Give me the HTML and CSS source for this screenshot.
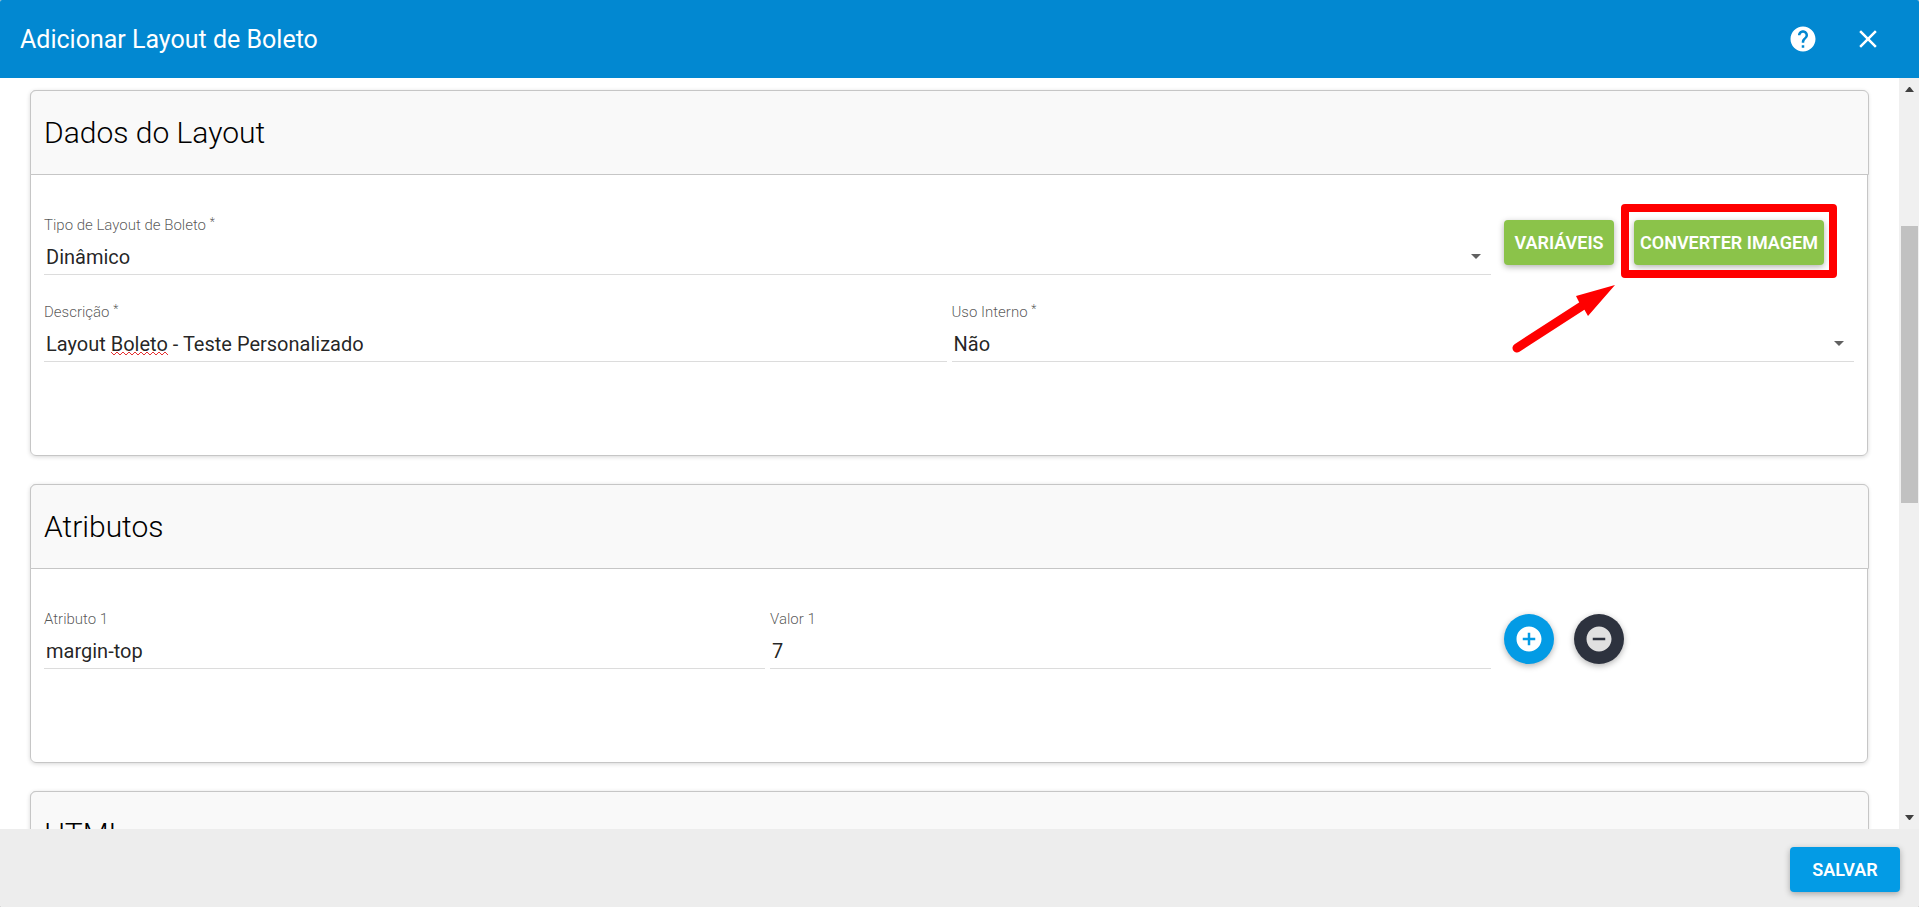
FILE: index.html
```html
<!DOCTYPE html>
<html lang="pt-BR">
<head>
<meta charset="utf-8">
<title>Adicionar Layout de Boleto</title>
<link rel="stylesheet" href="styles.css">
</head>
<body>
<div class="dialog">
  <header class="toolbar">
    <h1 class="toolbar-title">Adicionar Layout de Boleto</h1>
    <div class="toolbar-actions">
      <button class="icon-button" type="button" aria-label="Ajuda">
        <svg class="icon" viewBox="0 0 24 24"><path d="M12 2C6.480 2 2 6.480 2 12s4.480 10 10 10 10-4.480 10-10S17.520 2 12 2zm1 17h-2v-2h2v2zm2.070-7.750l-.9.920C13.450 12.900 13 13.500 13 15h-2v-.5c0-1.100.45-2.100 1.170-2.830l1.240-1.260c.37-.36.59-.86.59-1.410 0-1.100-.9-2-2-2s-2 .9-2 2H8c0-2.210 1.790-4 4-4s4 1.790 4 4c0 .88-.36 1.680-.93 2.250z"/></svg>
      </button>
      <button class="icon-button" type="button" aria-label="Fechar">
        <svg class="icon" viewBox="0 0 24 24"><path d="M19 6.410L17.590 5 12 10.590 6.410 5 5 6.410 10.590 12 5 17.590 6.410 19 12 13.410 17.590 19 19 17.590 13.410 12z"/></svg>
      </button>
    </div>
  </header>

  <div class="viewport">
    <main class="content">
      <section class="card">
        <h2 class="card-head">Dados do Layout</h2>
        <div class="card-body">
          <div class="row">
            <div class="field w80">
              <label for="tipo">Tipo de Layout de Boleto <sup>*</sup></label>
              <div class="control dropdown"><select id="tipo"><option>Dinâmico</option></select></div>
            </div>
            <div class="actions">
              <button class="btn btn-green" type="button">Variáveis</button>
              <div class="callout">
                <button class="btn btn-green btn-snug" type="button">Converter Imagem</button>
                <span class="callout-frame"></span>
                <svg class="callout-arrow" viewBox="0 0 104 72"><path d="M5 64L73 20" stroke="#f00" stroke-width="9" stroke-linecap="round"/><path d="M103 1L64 12L68 20L72 25L76 32Z" fill="#f00"/></svg>
              </div>
            </div>
          </div>
          <div class="row">
            <div class="field w50">
              <label for="descricao">Descrição <sup>*</sup></label>
              <div class="control">
                <input id="descricao" type="text" value="Layout Boleto - Teste Personalizado" spellcheck="false">
                <svg class="squiggle" viewBox="0 0 57 5"><path d="M0 1l3 3 3-3 3 3 3-3 3 3 3-3 3 3 3-3 3 3 3-3 3 3 3-3 3 3 3-3 3 3 3-3 3 3 3-3 3 3"/></svg>
              </div>
            </div>
            <div class="field w50">
              <label for="uso">Uso Interno <sup>*</sup></label>
              <div class="control dropdown"><select id="uso"><option>Não</option></select></div>
            </div>
          </div>
        </div>
      </section>

      <section class="card">
        <h2 class="card-head">Atributos</h2>
        <div class="card-body">
          <div class="row">
            <div class="field w40">
              <label for="atributo">Atributo 1</label>
              <div class="control"><input id="atributo" type="text" value="margin-top"></div>
            </div>
            <div class="field w40">
              <label for="valor">Valor 1</label>
              <div class="control"><input id="valor" type="text" value="7"></div>
            </div>
            <div class="actions">
              <button class="fab fab-add" type="button" aria-label="Adicionar atributo">
                <svg class="icon" viewBox="0 0 24 24"><path d="M12 2C6.480 2 2 6.480 2 12s4.480 10 10 10 10-4.480 10-10S17.520 2 12 2zm5 11h-4v4h-2v-4H7v-2h4V7h2v4h4v2z"/></svg>
              </button>
              <button class="fab fab-remove" type="button" aria-label="Remover atributo">
                <svg class="icon" viewBox="0 0 24 24"><path d="M12 2C6.480 2 2 6.480 2 12s4.480 10 10 10 10-4.480 10-10S17.520 2 12 2zm5 11H7v-2h10v2z"/></svg>
              </button>
            </div>
          </div>
        </div>
      </section>

      <section class="card">
        <h2 class="card-head">HTML</h2>
        <div class="card-body"></div>
      </section>
    </main>

    <div class="scrollbar" aria-hidden="true">
      <svg class="scroll-arrow" viewBox="0 0 9 5"><path d="M0 5h9L5 0H4z"/></svg>
      <div class="scroll-track"><div class="scroll-thumb"></div></div>
      <svg class="scroll-arrow" viewBox="0 0 9 5"><path d="M0 0h9L5 5H4z"/></svg>
    </div>
  </div>

  <footer class="footer">
    <button class="btn btn-blue" type="submit">Salvar</button>
  </footer>
</div>
</body>
</html>
```
FILE: styles.css
```css
* {
  box-sizing: border-box;
}

body {
  margin: 0;
  background: #b5b5b5;
  font-family: Roboto, "Liberation Sans", sans-serif;
  font-weight: 300;
  color: rgba(0, 0, 0, 0.87);
}

button,
input,
select {
  font: inherit;
  color: inherit;
}

.dialog {
  display: flex;
  flex-direction: column;
  height: 100vh;
  overflow: hidden;
  border-radius: 2px;
  background: #fff;
}

/* Toolbar */
.toolbar {
  display: flex;
  flex: none;
  align-items: center;
  justify-content: space-between;
  height: 78px;
  padding: 0 26px 0 20px;
  background: #0288d1;
  color: #fff;
}

.toolbar-title {
  margin: 0;
  font-size: 25px;
  font-weight: 400;
}

.toolbar-actions {
  display: flex;
  gap: 15px;
}

.icon-button {
  display: grid;
  place-items: center;
  width: 50px;
  height: 50px;
  padding: 0;
  border: 0;
  background: none;
}

.icon {
  width: 30px;
  height: 30px;
  fill: currentColor;
}

/* Scrolling area */
.viewport {
  display: flex;
  flex: 1;
  min-height: 0;
}

.content {
  display: flex;
  flex: 1;
  flex-direction: column;
  gap: 28px;
  padding: 12px 31px 0 30px;
  overflow: hidden;
}

.scrollbar {
  display: flex;
  flex-direction: column;
  align-items: center;
  justify-content: space-between;
  width: 20px;
  padding: 9px 1px 9px 2px;
  background: #f0f0f0;
}

.scroll-arrow {
  flex: none;
  width: 9px;
  height: 5px;
  fill: #404040;
}

.scroll-track {
  flex: 1;
  width: 100%;
  padding-top: 134px;
}

.scroll-thumb {
  height: 47%;
  background: #c1c1c1;
}

/* Cards */
.card {
  flex: none;
  border: 1px solid #c6c6c6;
  border-radius: 6px;
  box-shadow: 0 1px 4px rgba(0, 0, 0, 0.16);
}

.card-head {
  margin: -1px -2px 0 -1px;
  padding: 22px 13px;
  border: 1px solid #c6c6c6;
  border-radius: 6px 6px 0 0;
  background: #f9f9f9;
  color: #000;
  font-size: 30px;
  font-weight: 300;
  line-height: 39px;
}

.card-body {
  display: flex;
  flex-direction: column;
  gap: 27px;
  padding: 40px 8px 93px 13px;
}

.row {
  display: flex;
}

/* Fields */
.field {
  padding-right: 5px;
}

.w40 {
  width: 40%;
}

.w50 {
  width: 50%;
}

.w80 {
  width: 80%;
}

.field label {
  display: block;
  color: rgba(0, 0, 0, 0.68);
  font-size: 15px;
  line-height: 20px;
}

.field sup {
  font-size: 12px;
  line-height: 0;
  vertical-align: 4px;
}

.control {
  position: relative;
  height: 40px;
  padding-top: 5px;
  border-bottom: 1px solid #dcdcdc;
}

.control input,
.control select {
  width: 100%;
  height: 34px;
  margin: 0;
  padding: 0 2px;
  border: 0;
  outline: 0;
  background: none;
  appearance: none;
  font-size: 20px;
  font-weight: 400;
}

.dropdown::after {
  content: "";
  position: absolute;
  right: 10px;
  bottom: 15px;
  border: 5px solid transparent;
  border-top-color: #616161;
  border-bottom: 0;
}

.squiggle {
  position: absolute;
  bottom: 5px;
  left: 67px;
  width: 57px;
  height: 5px;
  fill: none;
  stroke: #e53030;
}

/* Buttons */
.actions {
  display: flex;
  align-items: flex-start;
  gap: 20px;
  padding: 5px 0 0 8px;
}

.btn {
  min-width: 110px;
  height: 45px;
  padding: 0;
  border: 0;
  border-radius: 4px;
  box-shadow: 0 2px 6px rgba(0, 0, 0, 0.3);
  color: #fff;
  font-size: 18px;
  font-weight: 600;
  text-transform: uppercase;
}

.btn-green {
  background: #8bc34a;
}

.btn-snug {
  padding: 0 6px;
}

.btn-blue {
  background: #039be5;
}

.fab {
  display: grid;
  place-items: center;
  width: 50px;
  height: 50px;
  padding: 0;
  border: 0;
  border-radius: 50%;
  box-shadow: 0 2px 6px rgba(0, 0, 0, 0.3);
}

.fab-add {
  background: #039be5;
  color: #fff;
}

.fab-remove {
  background: #2d323e;
  color: #e0e0e0;
}

/* Highlight drawn over the convert button */
.callout {
  position: relative;
}

.callout-frame {
  position: absolute;
  inset: -16px -13px -13px;
  border: 8px solid #f00;
  border-radius: 4px;
  pointer-events: none;
}

.callout-arrow {
  position: absolute;
  top: 64px;
  left: -122px;
  width: 104px;
  height: 72px;
  pointer-events: none;
}

/* Footer */
.footer {
  display: flex;
  flex: none;
  justify-content: flex-end;
  height: 78px;
  padding: 18px 19px 0;
  background: #ededed;
}
```
